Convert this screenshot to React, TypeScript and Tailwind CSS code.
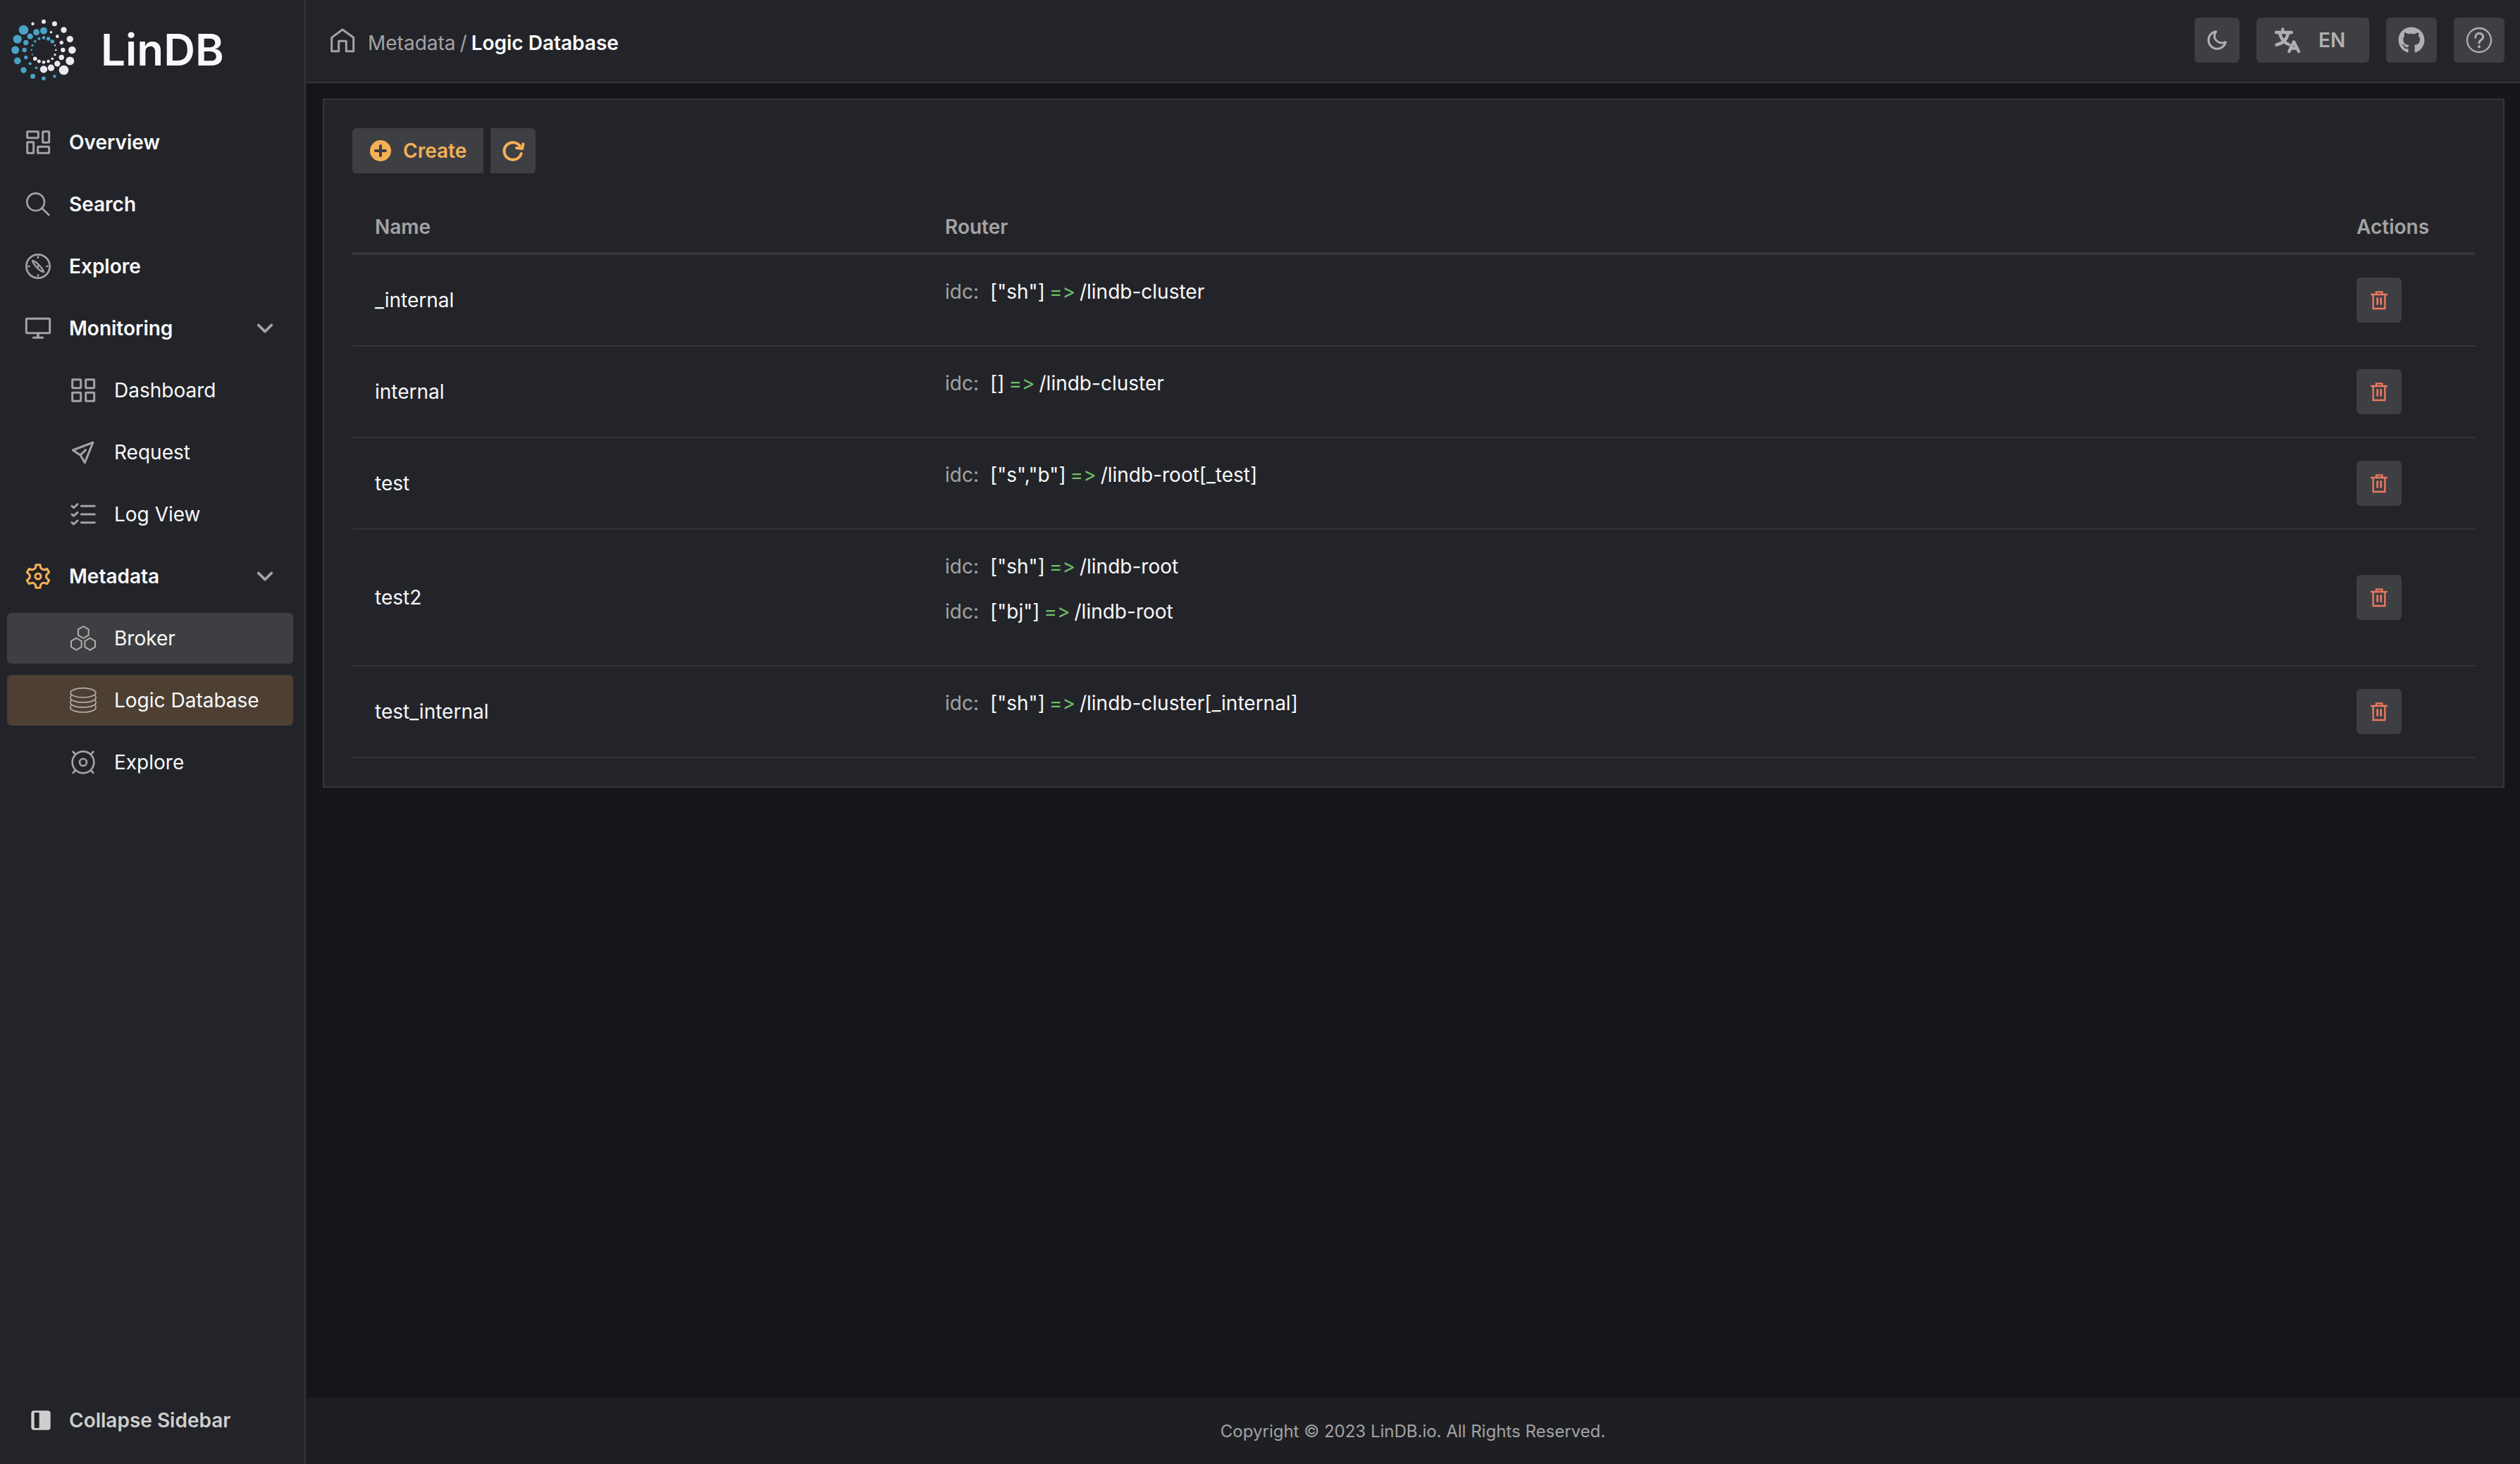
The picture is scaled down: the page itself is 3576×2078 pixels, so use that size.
import { useState } from 'react';
import type { ReactNode } from 'react';
import { FaGithub } from 'react-icons/fa';

type IconProps = { children: ReactNode; size?: string; box?: number; width?: number };

const Icon = ({ children, size = 'size-9', box = 108, width = 8 }: IconProps) => (
	<svg
		className={`${size} shrink-0 overflow-visible`}
		viewBox={`0 0 ${box} ${box}`}
		fill="none"
		stroke="currentColor"
		strokeWidth={width}
		strokeLinecap="round"
		strokeLinejoin="round"
		aria-hidden="true"
	>
		{children}
	</svg>
);

const icons = {
	overview: (
		<Icon width={9}>
			<rect x="8" y="8" width="47" height="27" rx="2" />
			<rect x="74" y="8" width="27" height="47" rx="2" />
			<rect x="8" y="53" width="27" height="47" rx="2" />
			<rect x="53" y="73" width="48" height="27" rx="2" />
		</Icon>
	),
	search: (
		<Icon>
			<circle cx="44" cy="44" r="37" />
			<path d="M71 71 100 99" />
		</Icon>
	),
	compass: (
		<Icon>
			<circle cx="54" cy="54" r="50" />
			<path d="M54 14v3M54 91v3M14 54h3M91 54h3" />
			<path d="M30 30C46 33 72 59 78 78 61 75 35 48 30 30Z" strokeWidth="7" />
			<circle cx="54" cy="54" r="2" strokeWidth="6" />
		</Icon>
	),
	monitor: (
		<Icon width={9}>
			<rect x="4" y="13" width="100" height="61" rx="3" />
			<path d="M54 76v16" strokeWidth="11" />
			<path d="M34 94h40" />
		</Icon>
	),
	dashboard: (
		<Icon width={9}>
			<rect x="8" y="8" width="36" height="36" rx="2" />
			<rect x="65" y="8" width="36" height="36" rx="2" />
			<rect x="8" y="64" width="36" height="36" rx="2" />
			<rect x="65" y="64" width="36" height="36" rx="2" />
		</Icon>
	),
	request: (
		<Icon width={9}>
			<path d="M96 12 10 45 42 66 61 98ZM43 65 65 44" />
		</Icon>
	),
	log: (
		<Icon width={9}>
			<path d="M46 19h57M46 54h57M46 89h57" />
			<path d="M6 19l8 7L30 11M6 54l8 7L30 46M6 89l8 7L30 81" />
		</Icon>
	),
	setting: (
		<Icon width={9}>
			<g transform="translate(54 54)">
				<path d="M-11-36-9-49H9L11-36Q18-27 26-28L38-32 47-17 37-8Q32 0 37 8L47 17 38 32 26 28Q18 27 11 36L9 49H-9L-11 36Q-18 27-26 28L-38 32-47 17-37 8Q-32 0-37-8L-47-17-38-32-26-28Q-18-27-11-36Z" />
				<circle r="12" />
			</g>
		</Icon>
	),
	broker: (
		<Icon width={6}>
			<path d="M55 3 77 16V41L55 54 33 41V16Z" />
			<path d="M25 53 47 66V91L25 104 3 91V66Z" />
			<path d="M83 53 105 66V91L83 104 61 91V66Z" />
		</Icon>
	),
	database: (
		<Icon width={5}>
			<ellipse cx="54" cy="22" rx="54" ry="20" />
			<path d="M4 31Q-1 37 0 44C2 69 106 69 108 44Q109 37 104 31" />
			<path d="M4 52Q-1 58 0 65C2 90 106 90 108 65Q109 58 104 52" />
			<path d="M4 73Q-1 79 0 86C2 111 106 111 108 86Q109 79 104 73" />
		</Icon>
	),
	target: (
		<Icon>
			<circle cx="54" cy="54" r="46" />
			<circle cx="54" cy="54" r="15" />
			<path d="M11 9 21 20M97 9 87 20M11 99 21 88M97 99 87 88" />
		</Icon>
	),
	home: (
		<Icon width={9}>
			<path d="M54 9 8 43V101H38V58H70V101H101V43Z" />
		</Icon>
	),
	chevron: (
		<Icon size="size-8" box={96} width={11}>
			<path d="M20 34 48 62 76 34" />
		</Icon>
	),
	plus: (
		<Icon size="size-8" box={96} width={12}>
			<circle cx="48" cy="48" r="45" fill="currentColor" stroke="none" />
			<path className="stroke-[#3e3f42]" d="M27 48H69M48 27V69" />
		</Icon>
	),
	refresh: (
		<Icon size="size-8" box={96} width={12}>
			<path d="M83 60A37 37 0 1 1 77 27" />
			<path d="M91 19 87 39 63 36" />
		</Icon>
	),
	moon: (
		<Icon size="size-8" box={96} width={9}>
			<path d="M44 11A37 37 0 1 0 85 56C56 69 23 43 44 11Z" />
		</Icon>
	),
	translate: (
		<Icon width={13}>
			<path d="M6 21H72M34 7V20M57 24C52 50 34 68 7 74M22 28C28 51 44 66 60 73" />
			<path d="M61 102 81 61 102 102M69 89H94" />
		</Icon>
	),
	help: (
		<Icon width={7}>
			<circle cx="54" cy="54" r="51" />
			<path d="M38 43C38 18 71 20 71 40 71 54 54 52 54 66" strokeWidth="9" />
			<circle cx="54" cy="82" r="6" fill="currentColor" stroke="none" />
		</Icon>
	),
	trash: (
		<Icon size="size-7" box={84} width={7}>
			<path d="M9 18H75M30 18V7H55V18M17 18V78H67V18" strokeLinejoin="miter" />
			<path d="M35 34V59M50 34V59" strokeWidth="8" />
		</Icon>
	),
	sidebar: (
		<Icon size="size-7" box={84}>
			<rect x="1" y="1" width="82" height="82" rx="12" fill="currentColor" stroke="none" />
			<rect className="fill-[#232429]" x="14" y="9" width="21" height="66" rx="4" stroke="none" />
		</Icon>
	),
};

// dot radii of each ring, clockwise from the top
const rings = [
	{
		distance: 121,
		dots: [9, 10.5, 12.5, 14, 16, 18, 20.5, 6.5, 8.5, 10.5, 12.5, 14.5, 16.5, 18.5, 20.5, 6.5],
		white: [0, 1, 2, 3, 4, 5, 6, 15],
	},
	{
		distance: 82,
		dots: [15, 5.5, 7, 8, 9.5, 11, 12.5, 14, 15.5, 5.5, 6.5, 8, 9.5, 11, 12.5, 13.5],
		white: [1, 2, 3, 4, 5, 6, 7, 8],
	},
	{
		distance: 52,
		dots: [7, 8, 8.5, 3.5, 4, 5, 5.5, 6.5, 7, 7.5, 8.5, 3.5, 4, 5, 5.5, 6],
		white: [3, 4, 5, 6, 7, 8, 9, 10],
	},
];

const Logo = () => (
	<svg className="size-[94px] shrink-0" viewBox="-141 -141 282 282" aria-hidden="true">
		{rings.map(({ distance, dots, white }) =>
			dots.map((r, i) => (
				<circle
					key={`${distance}-${i}`}
					r={r}
					cx={Math.sin((i * Math.PI) / 8) * distance}
					cy={-Math.cos((i * Math.PI) / 8) * distance}
					className={white.includes(i) ? 'fill-[#e8eaf0]' : 'fill-[#49a3c7]'}
				/>
			))
		)}
	</svg>
);

type MenuItem = { text: string; icon: ReactNode; items?: MenuItem[]; state?: 'hover' | 'active' };

const menu: MenuItem[] = [
	{ text: 'Overview', icon: icons.overview },
	{ text: 'Search', icon: icons.search },
	{ text: 'Explore', icon: icons.compass },
	{
		text: 'Monitoring',
		icon: icons.monitor,
		items: [
			{ text: 'Dashboard', icon: icons.dashboard },
			{ text: 'Request', icon: icons.request },
			{ text: 'Log View', icon: icons.log },
		],
	},
	{
		text: 'Metadata',
		icon: icons.setting,
		state: 'active',
		items: [
			{ text: 'Broker', icon: icons.broker, state: 'hover' },
			{ text: 'Logic Database', icon: icons.database, state: 'active' },
			{ text: 'Explore', icon: icons.target },
		],
	},
];

const SubItem = ({ text, icon, state }: MenuItem) => {
	const bg = state === 'active' ? 'bg-[#4d4033]' : state === 'hover' ? 'bg-[#3e3f42]' : '';
	return (
		<li>
			<a href="#" className={`flex h-18 items-center gap-[26px] rounded-md pl-[90px] ${bg}`}>
				<span className={state ? 'flex text-[#b2aeab]' : 'flex text-[#a3a3a5]'}>{icon}</span>
				<span>{text}</span>
			</a>
		</li>
	);
};

const MenuGroup = ({ text, icon, items, state }: MenuItem) => {
	const [open, setOpen] = useState(true);
	const label = (
		<>
			<span className={state ? 'flex text-[#f5b056]' : 'flex text-[#a3a3a5]'}>{icon}</span>
			<span>{text}</span>
		</>
	);
	if (!items) {
		return (
			<li>
				<a href="#" className="flex h-18 items-center gap-[26px] rounded-md pl-[26px] font-semibold">
					{label}
				</a>
			</li>
		);
	}
	return (
		<li className="flex flex-col gap-4">
			<button
				type="button"
				aria-expanded={open}
				onClick={() => setOpen(!open)}
				className="flex h-18 items-center gap-[26px] rounded-md pr-6 pl-[26px] font-semibold"
			>
				{label}
				<span className="ml-auto flex text-[#a3a3a5]">{icons.chevron}</span>
			</button>
			{open && (
				<ul className="flex flex-col gap-4">
					{items.map((item) => (
						<SubItem key={item.text} {...item} />
					))}
				</ul>
			)}
		</li>
	);
};

const Sidebar = () => (
	<aside className="flex w-[434px] shrink-0 flex-col border-r-2 border-[#353639] bg-[#232429]">
		<div className="flex items-center gap-[34px] pt-6 pl-[15px]">
			<Logo />
			<span className="text-[62px] leading-[94px] font-semibold">LinDB</span>
		</div>
		<nav className="grow pt-12 pr-4 pl-[10px]">
			<ul className="flex flex-col gap-4">
				{menu.map((item) => (
					<MenuGroup key={item.text} {...item} />
				))}
			</ul>
		</nav>
		<button
			type="button"
			className="mb-[26px] flex h-18 items-center gap-[26px] pl-11 font-semibold text-[#cecece]"
		>
			{icons.sidebar}
			Collapse Sidebar
		</button>
	</aside>
);

const Header = () => (
	<header className="flex items-center justify-between border-b-2 border-[#353639] bg-[#232429] pt-[25px] pr-[22px] pb-[27px] pl-[34px]">
		<nav aria-label="Breadcrumb" className="flex items-center gap-[18px]">
			<a href="#" aria-label="Home" className="text-[#a3a3a5]">
				{icons.home}
			</a>
			<p className="flex gap-[6px] pt-2">
				<a href="#" className="text-[#a3a3a5]">
					Metadata
				</a>
				<span className="text-[#a3a3a5]">/</span>
				<span className="font-semibold">Logic Database</span>
			</p>
		</nav>
		<div className="flex gap-6 text-[#b0b0b2]">
			<button
				type="button"
				aria-label="Toggle theme"
				className="flex size-16 items-center justify-center rounded-md bg-[#3e3f42]"
			>
				{icons.moon}
			</button>
			<button
				type="button"
				className="flex h-16 w-40 items-center gap-[26px] rounded-md bg-[#3e3f42] pl-[26px] font-semibold"
			>
				{icons.translate}
				EN
			</button>
			<button
				type="button"
				aria-label="GitHub"
				className="flex h-16 w-18 items-center justify-center rounded-md bg-[#3e3f42]"
			>
				<FaGithub className="size-[38px]" />
			</button>
			<button
				type="button"
				aria-label="Help"
				className="flex h-16 w-18 items-center justify-center rounded-md bg-[#3e3f42]"
			>
				{icons.help}
			</button>
		</div>
	</header>
);

const databases = [
	{ name: '_internal', routers: [{ values: '["sh"]', target: '/lindb-cluster' }] },
	{ name: 'internal', routers: [{ values: '[]', target: '/lindb-cluster' }] },
	{ name: 'test', routers: [{ values: '["s","b"]', target: '/lindb-root[_test]' }] },
	{
		name: 'test2',
		routers: [
			{ values: '["sh"]', target: '/lindb-root' },
			{ values: '["bj"]', target: '/lindb-root' },
		],
	},
	{ name: 'test_internal', routers: [{ values: '["sh"]', target: '/lindb-cluster[_internal]' }] },
];

const DatabaseTable = () => (
	<table className="mt-10 w-full table-fixed border-separate border-spacing-0 text-left">
		<thead className="text-[#a3a3a5]">
			<tr>
				<th className="w-[26.86%] border-b-4 border-[#353639] px-8 py-4 font-semibold">Name</th>
				<th className="border-b-4 border-[#353639] px-8 py-4 font-semibold">Router</th>
				<th className="w-[200px] border-b-4 border-[#353639] px-8 py-4 font-semibold">Actions</th>
			</tr>
		</thead>
		<tbody>
			{databases.map(({ name, routers }) => (
				<tr key={name}>
					<td className="border-b-2 border-[#353639] px-8 py-8">{name}</td>
					<td className="border-b-2 border-[#353639] px-8 py-8">
						{routers.map(({ values, target }) => (
							<div key={values} className="mb-6 flex [font-variant-ligatures:none]">
								<span className="mr-4 text-[#a3a3a5]">idc:</span>
								<span className="flex gap-[6px]">
									<span>{values}</span>
									<span className="text-[#6fbf68]">=&gt;</span>
									<span>{target}</span>
								</span>
							</div>
						))}
					</td>
					<td className="border-b-2 border-[#353639] px-8 py-8">
						<button
							type="button"
							aria-label={`Delete ${name}`}
							className="flex size-16 items-center justify-center rounded-md bg-[#3e3f42] text-[#ee7860]"
						>
							{icons.trash}
						</button>
					</td>
				</tr>
			))}
		</tbody>
	</table>
);

const App = () => (
	<div className="flex min-h-screen bg-[#16161a] font-[Inter,sans-serif] text-[28px] leading-10 text-[#f9f9f9]">
		<Sidebar />
		<div className="flex min-w-0 grow flex-col">
			<Header />
			<main className="grow pt-[22px] pr-[22px] pb-6 pl-6">
				<section className="border-2 border-[#353639] bg-[#232429] p-10">
					<div className="flex gap-[10px] font-semibold text-[#f5b056]">
						<button
							type="button"
							className="flex h-16 items-center gap-4 rounded-l-md bg-[#3e3f42] px-6"
						>
							{icons.plus}
							Create
						</button>
						<button
							type="button"
							aria-label="Refresh"
							className="flex size-16 items-center justify-center rounded-r-md bg-[#3e3f42]"
						>
							{icons.refresh}
						</button>
					</div>
					<DatabaseTable />
				</section>
			</main>
			<footer className="bg-[#1e1f23] pt-7 pb-[26px] text-center text-[24px] leading-10 text-[#a3a3a5]">
				Copyright © 2023 LinDB.io. All Rights Reserved.
			</footer>
		</div>
	</div>
);

export default App;
